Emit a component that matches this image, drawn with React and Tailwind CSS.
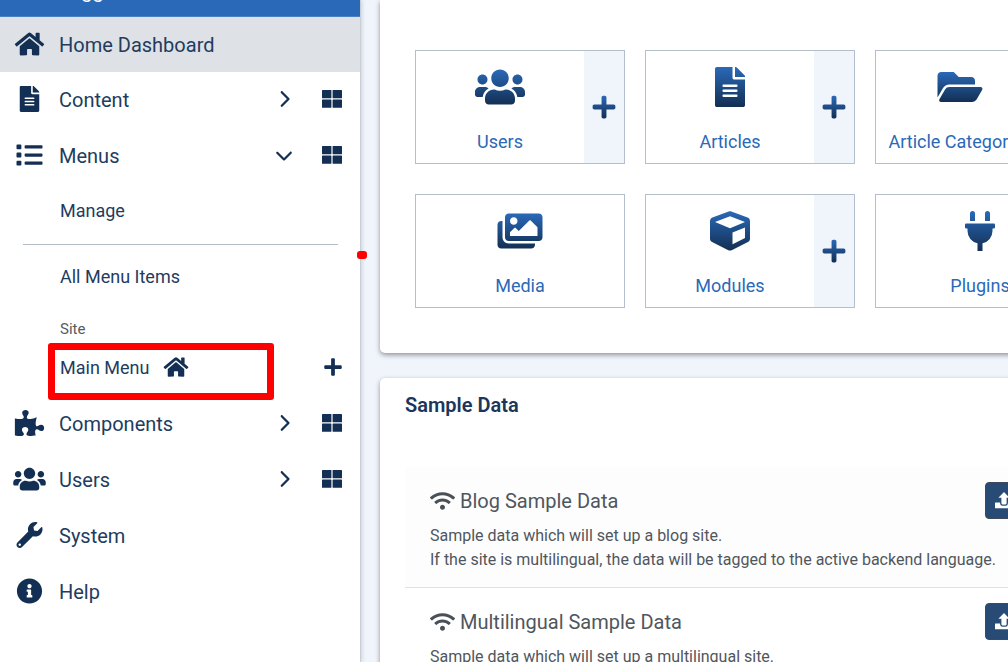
import {
  FaHome, FaFileAlt, FaList, FaPuzzlePiece, FaUsers, FaWrench,
  FaInfoCircle, FaWifi, FaImages, FaCube, FaFolderOpen, FaPlug, FaPlus, FaToggleOn,
} from "react-icons/fa";
import { FaChevronRight, FaChevronDown } from "react-icons/fa6";

function GridIcon() {
  return (
    <svg viewBox="0 0 20 18" className="h-[18px] w-5 fill-[#132f53]" aria-hidden="true">
      <rect x="0" y="0" width="9.4" height="8.3" rx="0.6" />
      <rect x="10.6" y="0" width="9.4" height="8.3" rx="0.6" />
      <rect x="0" y="9.5" width="9.4" height="8.3" rx="0.6" />
      <rect x="10.6" y="9.5" width="9.4" height="8.3" rx="0.6" />
    </svg>
  );
}

function UploadIcon() {
  return (
    <svg viewBox="0 0 18 17" className="h-[17px] w-[18px] shrink-0 fill-white" aria-hidden="true">
      <path d="M9 0 14.6 5.8H11.6V11.3Q11.6 12.4 10.5 12.4H7.5Q6.4 12.4 6.4 11.3V5.8H3.4Z" />
      <path d="M0.5 10.6H5.1V11.4Q5.3 13.6 7.5 13.7H10.5Q12.7 13.6 12.9 11.4V10.6H17.5Q18 10.6 18 11.1V15.7Q18 16.2 17.5 16.2H0.5Q0 16.2 0 15.7V11.1Q0 10.6 0.5 10.6Z" />
    </svg>
  );
}

function NavRow({ icon: Icon, label, chevron: Chevron, active }) {
  return (
    <div className={active ? "flex h-[55px] items-center bg-[#dee2e6]" : "flex h-14 items-center"}>
      <a href="#" className="flex min-w-0 flex-1 items-center">
        <span className="flex w-[59px] justify-center pb-0.5">
          <Icon className="h-[26px] w-[33px] fill-[#132f53]" />
        </span>
        {label}
      </a>
      {Chevron && (
        <>
          <button type="button" aria-label={`Expand ${label}`} className="flex w-12 justify-center pb-0.5">
            <Chevron className="size-[18px] fill-[#132f53]" />
          </button>
          <button type="button" aria-label={`${label} dashboard`} className="mr-1 flex w-12 justify-center pb-0.5">
            <GridIcon />
          </button>
        </>
      )}
    </div>
  );
}

function Sidebar() {
  return (
    <nav className="z-10 w-[361px] shrink-0 border-r border-[#c9ced8] bg-white text-[20px] text-[#223c60] shadow-[1px_0_4px_rgba(0,0,0,0.15)]">
      <button type="button" className="-mt-10 flex h-[57px] w-full items-center border-b border-[#4a80c4] bg-[#2a69b8] pt-1.5 text-white">
        <span className="flex w-[59px] justify-center">
          <FaToggleOn className="size-6" />
        </span>
        Toggle Menu
      </button>
      <NavRow icon={FaHome} label="Home Dashboard" active />
      <NavRow icon={FaFileAlt} label="Content" chevron={FaChevronRight} />
      <NavRow icon={FaList} label="Menus" chevron={FaChevronDown} />
      <div className="pb-[3px] text-[18px]">
        <a href="#" className="flex h-[52px] items-center pl-[60px]">Manage</a>
        <hr className="mt-2 mr-[22px] mb-[5px] ml-[23px] border-[#b4bcc8]" />
        <a href="#" className="flex h-[52px] items-center pl-[60px]">All Menu Items</a>
        <div className="mt-[15px] h-6 pl-[60px] text-[15px] leading-6 text-[#555b62]">Site</div>
        <div className="relative flex h-[52px] items-center pr-[17px] pl-[60px]">
          <a href="#" className="flex flex-1 items-center gap-3.5">
            Main Menu
            <FaHome className="h-[22px] w-[26px] fill-[#132f53]" />
          </a>
          <button type="button" aria-label="Add menu item">
            <FaPlus className="size-5 fill-[#132f53]" />
          </button>
          <span className="pointer-events-none absolute top-0.5 left-12 h-[57px] w-[226px] rounded-[3px] border-[7px] border-[#ff0000]" />
        </div>
      </div>
      <NavRow icon={FaPuzzlePiece} label="Components" chevron={FaChevronRight} />
      <NavRow icon={FaUsers} label="Users" chevron={FaChevronRight} />
      <NavRow icon={FaWrench} label="System" />
      <NavRow icon={FaInfoCircle} label="Help" />
    </nav>
  );
}

const tiles = [
  { label: "Users", icon: FaUsers, add: true },
  { label: "Articles", icon: FaFileAlt, add: true },
  { label: "Article Categories", icon: FaFolderOpen, add: true },
  { label: "Media", icon: FaImages },
  { label: "Modules", icon: FaCube, add: true },
  { label: "Plugins", icon: FaPlug },
];

function Tile({ label, icon: Icon, add }) {
  return (
    <div className="flex h-[114px] border border-[#b3bfcc]">
      <a href="#" className="flex flex-1 flex-col items-center pt-4 text-[18px] text-[#2a69b8]">
        <Icon className="h-10 w-[50px] fill-[url(#ink)]" />
        <span className="mt-5 leading-[30px] whitespace-nowrap">{label}</span>
      </a>
      {add && (
        <button type="button" aria-label={`Add ${label}`} className="flex w-10 items-center justify-center bg-[#f0f4fb]">
          <FaPlus className="size-[26px] fill-[url(#ink)]" />
        </button>
      )}
    </div>
  );
}

function SampleRow({ title, lines, shaded }) {
  return (
    <li className={shaded ? "border-b border-[#dfe1e3] bg-[#fdfdfd] px-[25px] py-[15px]" : "px-[25px] py-[15px]"}>
      <div className="mb-[5px] flex items-center justify-between">
        <h3 className="flex items-center gap-[5px] text-[20px]">
          <FaWifi className="h-5 w-[25px] fill-[#495057]" />
          {title}
        </h3>
        <button type="button" className="flex h-[37px] w-[85px] items-center gap-1 rounded-[4px] border border-[#3f4a58] bg-[#284b76] px-[9px] text-[16px] text-white">
          <UploadIcon />
          Install
        </button>
      </div>
      {lines.map((line) => (
        <p key={line} className="text-[16px] leading-6">{line}</p>
      ))}
    </li>
  );
}

export default function App() {
  return (
    <div className="flex h-screen overflow-hidden bg-[#f0f4fb] font-['Roboto',sans-serif]">
      <svg className="absolute size-0" aria-hidden="true">
        <defs>
          <linearGradient id="ink" x1="0" y1="0" x2="0" y2="1">
            <stop offset="0" stopColor="#2a69b8" />
            <stop offset="1" stopColor="#132f53" />
          </linearGradient>
        </defs>
      </svg>
      <div className="relative flex shrink-0">
        <Sidebar />
        <span className="absolute top-[251px] -right-1.5 z-20 h-2 w-2.5 rounded-[3px] bg-[#ff0000]" />
      </div>
      <main className="min-w-0 flex-1 overflow-hidden pl-[19px]">
        <section className="min-w-[740px] rounded-b-[5px] bg-white px-[35px] pt-[50px] pb-[45px] shadow-[0_2px_5px_rgba(0,0,0,0.4)]">
          <div className="grid grid-cols-3 gap-x-5 gap-y-[30px]">
            {tiles.map((tile) => (
              <Tile key={tile.label} {...tile} />
            ))}
          </div>
        </section>
        <section className="mt-[25px] min-w-[740px] rounded-[5px] bg-white px-[25px] pt-[13px] pb-6 shadow-[0_2px_5px_rgba(0,0,0,0.4)]">
          <h2 className="text-[20px] leading-7 font-semibold text-[#1b365a]">Sample Data</h2>
          <ul className="mt-12 text-[#50565d]">
            <SampleRow
              shaded
              title="Blog Sample Data"
              lines={[
                "Sample data which will set up a blog site.",
                "If the site is multilingual, the data will be tagged to the active backend language.",
              ]}
            />
            <SampleRow
              title="Multilingual Sample Data"
              lines={["Sample data which will set up a multilingual site."]}
            />
          </ul>
        </section>
      </main>
    </div>
  );
}
